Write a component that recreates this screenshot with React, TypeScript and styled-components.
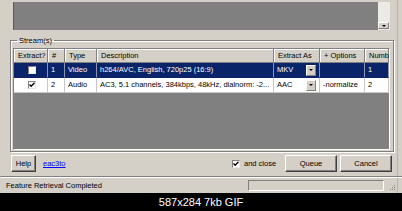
import styled, { createGlobalStyle } from "styled-components";

const GlobalStyle = createGlobalStyle`
  html, body { margin: 0; padding: 0; background: #000; }
  body { font-family: "Liberation Sans", Arial, sans-serif; }
`;

const Frame = styled.div`
  width: 402px;
  height: 211px;
  display: flex;
  flex-direction: column;
  overflow: hidden;
`;

const Window = styled.div`
  height: 193px;
  background: #d4d0c8;
  display: flex;
  flex-direction: column;
  font-size: 7.5px;
  color: #000;
  box-shadow: inset -4px 0 0 #d4d0c8, inset -5px 0 0 #b8b4ac;
`;

/* top list (stream list of previous panel) */
const TopRow = styled.div`
  display: flex;
  height: 28px;
  margin: 2px 12px 0 13px;
`;

const ListArea = styled.div`
  flex: 1;
  background: #808080;
  border-left: 1px solid #5a5a5a;
`;

const Scrollbar = styled.div`
  width: 12px;
  background: #eceae4;
  display: flex;
  flex-direction: column;
  justify-content: flex-end;
  padding-bottom: 1px;
  box-sizing: border-box;
`;

const ArrowButton = styled.div<{ $w: number; $h: number }>`
  width: ${(p) => p.$w}px;
  height: ${(p) => p.$h}px;
  box-sizing: border-box;
  background: #d4d0c8;
  border: 1px solid;
  border-color: #fff #808080 #808080 #fff;
  display: flex;
  align-items: center;
  justify-content: center;
  flex-shrink: 0;
`;

const Triangle = styled.div<{ $size: number }>`
  width: 0;
  height: 0;
  border-left: ${(p) => p.$size}px solid transparent;
  border-right: ${(p) => p.$size}px solid transparent;
  border-top: ${(p) => p.$size}px solid #000;
`;

/* group box */
const Group = styled.fieldset`
  margin: 6px 8px 0 10px;
  padding: 0 3px 1px 2px;
  border: 1px solid #808080;
  box-shadow: inset 1px 1px 0 #fff, 1px 1px 0 #fff;
  min-width: 0;
`;

const Legend = styled.legend`
  padding: 0 2px;
  margin-left: 4px;
  line-height: 9px;
  font-size: 7.5px;
`;

const Table = styled.div`
  margin-top: 3px;
  height: 102px;
  box-sizing: border-box;
  border: 1px solid;
  border-color: #808080 #fff #fff #808080;
  background: #808080;
  display: grid;
  grid-template-columns: 34px 17px 32px 177px 46px 45px 24px;
  grid-template-rows: 14px 15px 15px;
  align-content: start;
  overflow: hidden;
`;

const HeadCell = styled.div`
  background: #d4d0c8;
  box-shadow: inset -1px -1px 0 #808080, inset 1px 1px 0 #fff;
  padding-left: 4px;
  line-height: 14px;
  white-space: nowrap;
  overflow: hidden;
`;

const Cell = styled.div<{ $sel?: boolean; $center?: boolean }>`
  background: ${(p) => (p.$sel ? "#0a246a" : "#fff")};
  color: ${(p) => (p.$sel ? "#fff" : "#000")};
  border-right: 1px solid ${(p) => (p.$sel ? "#8d93b0" : "#c8c8c8")};
  border-bottom: 1px solid ${(p) => (p.$sel ? "#0a246a" : "#c8c8c8")};
  box-sizing: border-box;
  padding-left: 3px;
  line-height: 14px;
  white-space: nowrap;
  overflow: hidden;
  text-overflow: ellipsis;
  display: flex;
  align-items: center;
  justify-content: ${(p) => (p.$center ? "center" : "flex-start")};
`;

const ComboText = styled.span`
  flex: 1;
`;

const Check = styled.div`
  width: 8px;
  height: 8px;
  box-sizing: border-box;
  background: #fff;
  border: 1px solid;
  border-color: #808080 #e8e8e8 #e8e8e8 #808080;
  display: flex;
  align-items: center;
  justify-content: center;
  flex-shrink: 0;
`;

function CheckBox({ checked }: { checked?: boolean }) {
  return (
    <Check>
      {checked && (
        <svg width="6" height="6" viewBox="0 0 6 6">
          <path d="M0.5 2.5 L2.2 4.3 L5.5 0.8" stroke="#000" strokeWidth="1.3" fill="none" />
        </svg>
      )}
    </Check>
  );
}

/* bottom controls */
const ButtonRow = styled.div`
  display: flex;
  align-items: center;
  height: 17px;
  margin-top: 3px;
  padding: 0 10px 0 11px;
`;

const Button = styled.div<{ $w: number }>`
  width: ${(p) => p.$w}px;
  height: 17px;
  box-sizing: border-box;
  border: 1px solid;
  border-color: #fff #404040 #404040 #fff;
  box-shadow: inset -1px -1px 0 #808080;
  display: flex;
  align-items: center;
  justify-content: center;
`;

const Link = styled.span`
  margin-left: 7px;
  color: #0000ff;
  text-decoration: underline;
`;

const Spacer = styled.div`
  flex: 1;
`;

const CloseOption = styled.div`
  width: 53px;
  display: flex;
  align-items: center;
  gap: 4px;
`;

const Gap = styled.div`
  width: 3px;
`;

const StatusBar = styled.div`
  margin-top: 4px;
  flex: 1;
  border-top: 1px solid #808080;
  box-shadow: inset 0 1px 0 #fff;
  display: flex;
  align-items: center;
  padding: 0 6px;
`;

const StatusText = styled.span`
  flex: 1;
`;

const Progress = styled.div`
  width: 136px;
  height: 11px;
  box-sizing: border-box;
  border: 1px solid;
  border-color: #808080 #fff #fff #808080;
`;

const Grip = styled.div`
  width: 8px;
  height: 8px;
  margin-left: 4px;
  align-self: flex-end;
  margin-bottom: 2px;
`;

const Caption = styled.div`
  flex: 1;
  background: #000;
  color: #fff;
  font-family: "Liberation Sans", Arial, sans-serif;
  font-size: 11px;
  display: flex;
  align-items: center;
  justify-content: center;
`;

const rows = [
  {
    sel: true,
    checked: false,
    n: "1",
    type: "Video",
    desc: "h264/AVC, English, 720p25 (16:9)",
    as: "MKV",
    opts: "",
  },
  {
    sel: false,
    checked: true,
    n: "2",
    type: "Audio",
    desc: "AC3, 5.1 channels, 384kbps, 48kHz, dialnorm: -2...",
    as: "AAC",
    opts: "-normalize",
  },
];

const headers = ["Extract?", "#", "Type", "Description", "Extract As", "+ Options", "Numb"];

export default function App() {
  return (
    <Frame>
      <GlobalStyle />
      <Window>
        <TopRow>
          <ListArea />
          <Scrollbar>
            <ArrowButton $w={11} $h={7}>
              <Triangle $size={2} />
            </ArrowButton>
          </Scrollbar>
        </TopRow>

        <Group>
          <Legend>Stream(s)</Legend>
          <Table>
            {headers.map((h) => (
              <HeadCell key={h}>{h}</HeadCell>
            ))}
            {rows.map((r) => [
              <Cell key={r.n + "c"} $sel={r.sel} $center>
                <CheckBox checked={r.checked} />
              </Cell>,
              <Cell key={r.n + "n"} $sel={r.sel}>{r.n}</Cell>,
              <Cell key={r.n + "t"} $sel={r.sel}>{r.type}</Cell>,
              <Cell key={r.n + "d"} $sel={r.sel}>{r.desc}</Cell>,
              <Cell key={r.n + "a"} $sel={r.sel}>
                <ComboText>{r.as}</ComboText>
                <ArrowButton $w={10} $h={11}>
                  <Triangle $size={2} />
                </ArrowButton>
                <Gap />
              </Cell>,
              <Cell key={r.n + "o"} $sel={r.sel}>{r.opts}</Cell>,
              <Cell key={r.n + "m"} $sel={r.sel}>{r.n}</Cell>,
            ])}
          </Table>
        </Group>

        <ButtonRow>
          <Button $w={25}>Help</Button>
          <Link>eac3to</Link>
          <Spacer />
          <CloseOption>
            <CheckBox checked />
            <span>and close</span>
          </CloseOption>
          <Button $w={52}>Queue</Button>
          <Gap />
          <Button $w={52}>Cancel</Button>
        </ButtonRow>

        <StatusBar>
          <StatusText>Feature Retrieval Completed</StatusText>
          <Progress />
          <Grip>
            <svg width="8" height="8" viewBox="0 0 8 8">
              <g fill="#808080">
                <rect x="6" y="2" width="1" height="1" />
                <rect x="4" y="4" width="1" height="1" />
                <rect x="6" y="4" width="1" height="1" />
                <rect x="2" y="6" width="1" height="1" />
                <rect x="4" y="6" width="1" height="1" />
                <rect x="6" y="6" width="1" height="1" />
              </g>
            </svg>
          </Grip>
        </StatusBar>
      </Window>
      <Caption>587x284 7kb GIF</Caption>
    </Frame>
  );
}
